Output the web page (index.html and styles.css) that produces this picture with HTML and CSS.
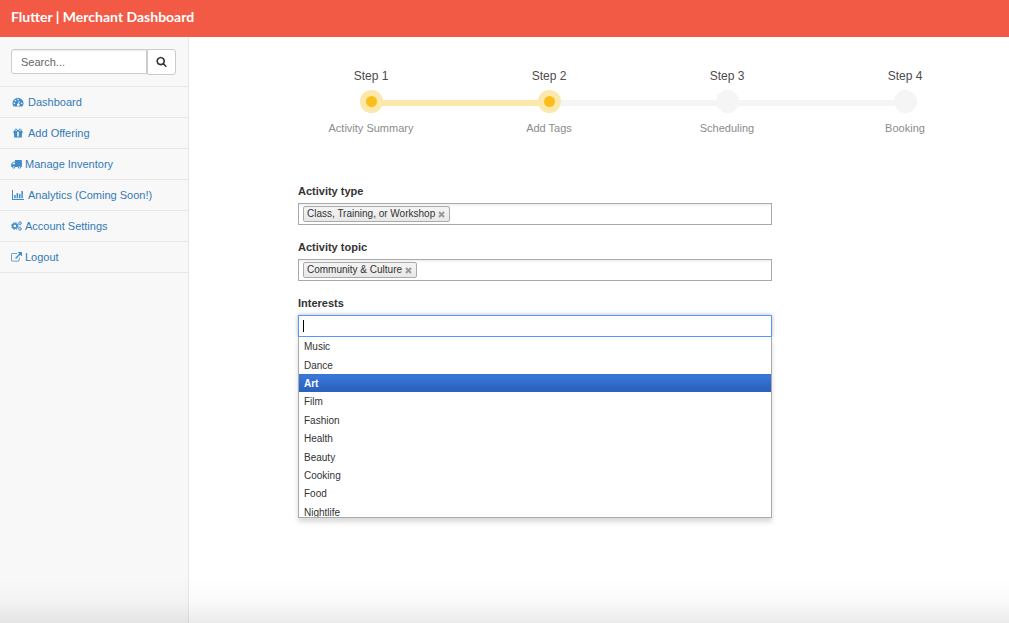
FILE: index.html
```html
<!DOCTYPE html>
<html lang="en">
<head>
<meta charset="utf-8">
<title>Flutter | Merchant Dashboard</title>
<link rel="stylesheet" href="styles.css">
</head>
<body>
<header class="topbar"><a class="brand" href="#">Flutter | Merchant Dashboard</a></header>
<div class="layout">
  <aside class="sidebar">
    <form class="search" role="search">
      <input class="search-input" type="text" placeholder="Search..." aria-label="Search">
      <button class="search-button" type="button" aria-label="Submit search">
        <svg class="search-icon" viewBox="0 0 1792 1792"><path d="M1216 832q0-185-131.5-316.5t-316.5-131.5-316.5 131.5-131.5 316.5 131.5 316.5 316.5 131.5 316.5-131.5 131.5-316.5zm512 832q0 52-38 90t-90 38q-54 0-90-38l-343-342q-179 124-399 124-143 0-273.5-55.5t-225-150-150-225-55.5-273.5 55.5-273.5 150-225 225-150 273.5-55.5 273.5 55.5 225 150 150 225 55.5 273.5q0 220-124 399l343 343q37 37 37 90z"/></svg>
      </button>
    </form>
    <nav class="menu">
      <a class="menu-link" href="#">
        <svg class="icon icon-wide" viewBox="0 0 14 10"><path fill-rule="evenodd" d="M2.8 9.5A5.3 5.3 0 1 1 11.2 9.5ZM3.4 5.6a.8.8 0 1 0 0 1.6.8.8 0 0 0 0-1.6ZM4.5 3a.8.8 0 1 0 0 1.6.8.8 0 0 0 0-1.6ZM7 1.8a.8.8 0 1 0 0 1.6.8.8 0 0 0 0-1.6ZM10.6 5.6a.8.8 0 1 0 0 1.6.8.8 0 0 0 0-1.6ZM7.9 3.8 7.2 6.4a1.3 1.3 0 1 0 .8.2L8.7 4Z"/></svg>
        Dashboard</a>
      <a class="menu-link" href="#">
        <svg class="icon icon-wide" viewBox="0 0 14 10"><path d="M2.500 3h3.700v2.600H2.500ZM7.800 3h3.700v2.600H7.800ZM3.100 5.600h3.100v3.900H3.700a.6.6 0 0 1-.6-.6ZM7.800 5.600h3.100v3.300a.6.6 0 0 1-.6.6H7.800ZM6.200 8.600h1.600v.9H6.200Z"/><path class="stroke" d="M7 3.200H4.800a1.100 1.100 0 1 1 .9-1.900L7 3.200l1.300-1.900a1.100 1.100 0 1 1 .9 1.900Z"/></svg>
        Add Offering</a>
      <a class="menu-link" href="#">
        <svg class="icon" viewBox="0 0 11 10"><path fill-rule="evenodd" d="M4.400 1h6a.5.5 0 0 1 .5.5v6a.5.5 0 0 1-.5.5h-.5a1.500 1.500 0 0 1-3 0H4.300a1.500 1.500 0 0 1-3 0H.7a.5.5 0 0 1-.5-.5V5.200q0-.5.3-.8l1.300-1.300q.3-.3.7-.3h1.400V1.500A.5.5 0 0 1 4.400 1ZM2.600 3.600 1.200 5v.2h2.700V3.600ZM2.800 7.300a.7.7 0 1 0 0 1.400.7.7 0 0 0 0-1.400ZM8.400 7.300a.7.7 0 1 0 0 1.400.7.7 0 0 0 0-1.400Z"/></svg>
        Manage Inventory</a>
      <a class="menu-link" href="#">
        <svg class="icon icon-wide" viewBox="0 0 14 10"><path d="M1 0h1v9h11v1H1ZM3.200 5h1.500v3.300H3.200ZM5.600 3h1.500v5.300H5.600ZM8 4h1.500v4.300H8ZM10.400 1h1.500v7.300h-1.500Z"/></svg>
        Analytics (Coming Soon!)</a>
      <a class="menu-link" href="#">
        <svg class="icon" viewBox="0 0 11 10"><circle class="gear-body" cx="3.9" cy="5" r="2.2"/><circle class="gear-teeth" cx="3.9" cy="5" r="3.4"/><circle class="small-gear" cx="9" cy="2.2" r="1.2"/><circle class="small-teeth" cx="9" cy="2.2" r="1.9"/><circle class="small-gear" cx="9" cy="7.8" r="1.2"/><circle class="small-teeth" cx="9" cy="7.8" r="1.9"/></svg>
        Account Settings</a>
      <a class="menu-link" href="#">
        <svg class="icon" viewBox="0 0 1792 1600"><path d="M1408 928v320q0 119-84.500 203.500t-203.500 84.500h-832q-119 0-203.500-84.500t-84.500-203.500v-832q0-119 84.500-203.500t203.500-84.500h704q14 0 23 9t9 23v64q0 14-9 23t-23 9h-704q-66 0-113 47t-47 113v832q0 66 47 113t113 47h832q66 0 113-47t47-113v-320q0-14 9-23t23-9h64q14 0 23 9t9 23zm384-864v512q0 26-19 45t-45 19-45-19l-176-176-652 652q-10 10-23 10t-23-10l-114-114q-10-10-10-23t10-23l652-652-176-176q-19-19-19-45t19-45 45-19h512q26 0 45 19t19 45z"/></svg>
        Logout</a>
    </nav>
  </aside>
  <main class="content">
    <ol class="wizard">
      <li class="step done"><span class="step-name">Step 1</span><span class="track"><span class="dot"></span></span><span class="step-info">Activity Summary</span></li>
      <li class="step current"><span class="step-name">Step 2</span><span class="track"><span class="dot"></span></span><span class="step-info">Add Tags</span></li>
      <li class="step"><span class="step-name">Step 3</span><span class="track"><span class="dot"></span></span><span class="step-info">Scheduling</span></li>
      <li class="step"><span class="step-name">Step 4</span><span class="track"><span class="dot"></span></span><span class="step-info">Booking</span></li>
    </ol>
    <form class="tags-form">
      <div class="field">
        <label class="label" for="type">Activity type</label>
        <div class="choices">
          <span class="chip">Class, Training, or Workshop<button class="remove" type="button" aria-label="Remove Class, Training, or Workshop"><svg class="cross" viewBox="0 0 7 7"><path d="M1 1l5 5M6 1 1 6"/></svg></button></span>
          <input class="choice-input" id="type" type="text">
        </div>
      </div>
      <div class="field">
        <label class="label" for="topic">Activity topic</label>
        <div class="choices">
          <span class="chip">Community &amp; Culture<button class="remove" type="button" aria-label="Remove Community &amp; Culture"><svg class="cross" viewBox="0 0 7 7"><path d="M1 1l5 5M6 1 1 6"/></svg></button></span>
          <input class="choice-input" id="topic" type="text">
        </div>
      </div>
      <div class="field">
        <label class="label" for="interests">Interests</label>
        <div class="choices active">
          <input class="choice-input caret" id="interests" type="text" role="combobox" aria-expanded="true" aria-controls="interest-list">
        </div>
        <div class="dropdown">
          <ul class="options" id="interest-list" role="listbox">
            <li class="option" role="option">Music</li>
            <li class="option" role="option">Dance</li>
            <li class="option highlighted" role="option" aria-selected="true">Art</li>
            <li class="option" role="option">Film</li>
            <li class="option" role="option">Fashion</li>
            <li class="option" role="option">Health</li>
            <li class="option" role="option">Beauty</li>
            <li class="option" role="option">Cooking</li>
            <li class="option" role="option">Food</li>
            <li class="option" role="option">Nightlife</li>
          </ul>
        </div>
      </div>
    </form>
  </main>
</div>
<div class="page-shade"></div>
</body>
</html>
```
FILE: styles.css
```css
* { box-sizing: border-box; }

body {
  margin: 0;
  min-height: 100vh;
  display: flex;
  flex-direction: column;
  background: #fff;
  color: #333;
  font: 11px/16px "Liberation Sans", Arial, sans-serif;
}

.topbar {
  display: flex;
  align-items: center;
  height: 37px;
  padding: 0 11px 4px;
  background: #f25a46;
}

.brand {
  color: #fff;
  font: bold 14px/20px Lato, sans-serif;
  text-decoration: none;
}

.layout { display: flex; flex: 1; }

.sidebar {
  flex: none;
  width: 189px;
  background: #f8f8f8;
  border-right: 1px solid #e7e7e7;
}

.search {
  display: flex;
  align-items: flex-start;
  padding: 12px 12px 11px 11px;
  border-bottom: 1px solid #e7e7e7;
}

.search-input {
  flex: 1;
  min-width: 0;
  height: 25px;
  padding: 0 9px;
  border: 1px solid #ccc;
  border-radius: 3px 0 0 3px;
  background: #fff;
  font: inherit;
  box-shadow: inset 0 1px 1px rgba(0, 0, 0, .07);
}

.search-input::placeholder { color: #666; }

.search-button {
  display: flex;
  align-items: center;
  justify-content: center;
  width: 29px;
  height: 26px;
  padding: 0 1px 2px 0;
  border: 1px solid #ccc;
  border-radius: 0 3px 3px 0;
  background: #fff;
}

.search-icon { width: 11px; height: 11px; fill: #333; }

.menu-link {
  display: flex;
  align-items: center;
  gap: 3px;
  height: 31px;
  padding-left: 11px;
  border-bottom: 1px solid #e7e7e7;
  color: #337ab7;
  text-decoration: none;
}

.icon { width: 11px; height: 10px; fill: #428bca; }
.icon-wide { width: 14px; }
.stroke { fill: none; stroke: #428bca; stroke-width: 1; }
.gear-body, .small-gear, .gear-teeth, .small-teeth { fill: none; stroke: #428bca; }
.gear-body { stroke-width: 1.7; }
.gear-teeth { stroke-width: 1; stroke-dasharray: 1.4 1.27; }
.small-gear { stroke-width: .9; }
.small-teeth { stroke-width: .6; stroke-dasharray: 1 .99; }

.content { flex: 1; padding: 30px 15px 0 93px; }

.wizard {
  display: flex;
  margin: 0 0 47px;
  padding: 0;
  list-style: none;
}

.step {
  flex: 1;
  display: flex;
  flex-direction: column;
  align-items: center;
}

.step-name { color: #4c4c4c; font-size: 12px; line-height: 18px; }

.track {
  position: relative;
  display: flex;
  justify-content: center;
  width: 100%;
  height: 23px;
  margin: 5px 0 7px;
}

.step:not(:last-child) .track::before {
  content: "";
  position: absolute;
  top: 10px;
  left: 50%;
  width: 100%;
  height: 6px;
  background: #f5f5f5;
}

.done:not(:last-child) .track::before { background: #fbe8aa; }

.dot {
  position: relative;
  z-index: 1;
  width: 23px;
  height: 23px;
  border-radius: 50%;
  background: #f5f5f5;
}

.done .dot, .current .dot { border: 6px solid #fbe8aa; background: #fbbd19; }

.step-info { color: #8c8c8c; }

.tags-form { width: 66.6%; margin-left: 16px; }
.field { margin-bottom: 14px; }

.label {
  display: block;
  margin-bottom: 4px;
  font-weight: bold;
}

.choices {
  display: flex;
  align-items: center;
  height: 22px;
  padding: 0 4px;
  border: 1px solid #aaa;
  background: linear-gradient(#eee 0, #fff 3px);
}

.active {
  border-color: #5897fb;
  background: #fff;
  box-shadow: 0 0 4px rgba(0, 0, 0, .3);
}

.chip {
  display: flex;
  align-items: center;
  gap: 3px;
  height: 16px;
  padding: 0 4px 0 3px;
  border: 1px solid #aaa;
  border-radius: 2px;
  background: linear-gradient(#f4f4f4, #e8e8e8);
  font-size: 10px;
  line-height: 14px;
}

.remove { display: flex; padding: 0; border: 0; background: none; }
.cross { width: 7px; height: 7px; stroke: #999; stroke-width: 2; }

.choice-input {
  flex: 1;
  min-width: 0;
  height: 12px;
  padding: 0 4px;
  border: 0;
  outline: 0;
  background: none;
  font: inherit;
}

.caret { background: linear-gradient(#000, #000) 0 0 / 1px 100% no-repeat; }

.dropdown {
  height: 181px;
  overflow: hidden;
  border: 1px solid #aaa;
  border-top: 0;
  background: #fff;
  box-shadow: 0 4px 5px rgba(0, 0, 0, .15);
}

.options {
  display: grid;
  grid-auto-rows: 1fr;
  height: 184px;
  margin: 0;
  padding: 0;
  list-style: none;
}

.option {
  display: flex;
  align-items: center;
  padding: 2px 5px 0;
  font-size: 10px;
}

.highlighted {
  background: linear-gradient(#3875d7 20%, #2a62bc 90%);
  color: #fff;
  font-weight: bold;
}

.page-shade {
  position: fixed;
  inset: auto 0 0 0;
  height: 44px;
  background: linear-gradient(rgba(0, 0, 0, 0), rgba(0, 0, 0, .02) 50%, rgba(0, 0, 0, .08));
  pointer-events: none;
}
```
